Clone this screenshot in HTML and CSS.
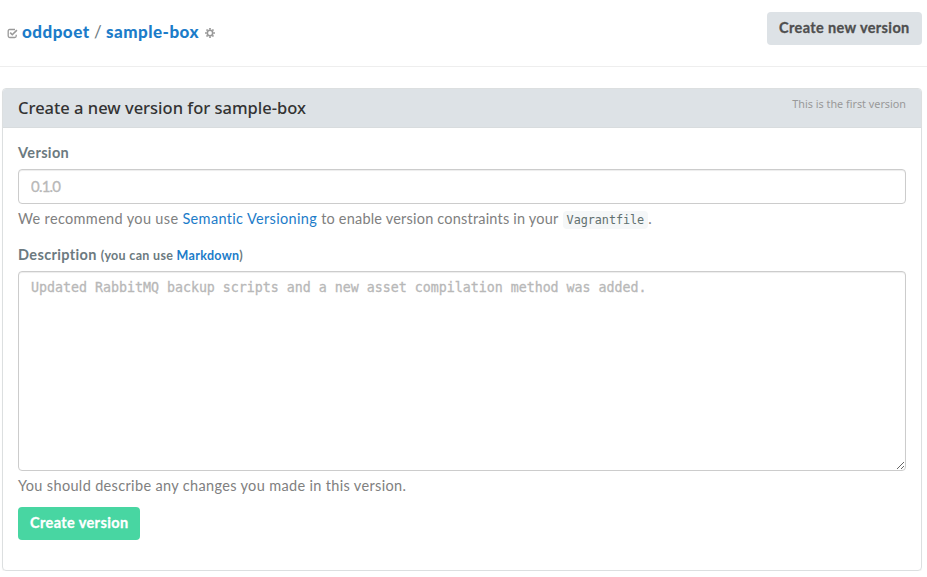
FILE: index.html
```html
<!DOCTYPE html>
<html lang="en">
<head>
<meta charset="utf-8">
<title>Create a new version for sample-box</title>
<link rel="stylesheet" href="styles.css">
</head>
<body>
<header class="page-header">
  <h1 class="crumbs">
    <svg class="icon-check" width="11" height="11" viewBox="0 0 11 11" fill="none" stroke="#999" stroke-width="1.3"><path d="M8 1.5H2.7Q1.2 1.5 1.2 3v5Q1.2 9.5 2.7 9.5h5Q9.2 9.5 9.2 8V6.7"/><path d="M3.2 4.6l2.1 2.1 4.6-4.6" stroke-width="1.6"/></svg>
    <a class="owner" href="#">oddpoet</a>
    <span class="slash">/</span>
    <a class="box" href="#">sample-box</a>
    <svg class="icon-gear" width="10" height="10" viewBox="0 0 10 10" fill="none" stroke="#999"><circle cx="5" cy="5" r="2.7" stroke-width="1.6"/><path d="M5 0v1.8M5 8.2V10M0 5h1.8M8.2 5H10M1.5 1.5l1.2 1.2M7.3 7.3l1.2 1.2M1.5 8.5l1.2-1.2M7.3 2.7l1.2-1.2" stroke-width="1.7"/></svg>
  </h1>
  <button class="btn btn-default" type="button">Create new version</button>
</header>
<main class="panel">
  <div class="panel-heading">
    <h2 class="panel-title">Create a new version for sample-box</h2>
    <span class="panel-note">This is the first version</span>
  </div>
  <form class="panel-body">
    <label class="label" for="version">Version</label>
    <input class="field" id="version" type="text" placeholder="0.1.0">
    <p class="help">We recommend you use <a href="#">Semantic Versioning</a> <span class="help-tail">to enable version constraints in your</span> <code>Vagrantfile</code>.</p>
    <label class="label label-description" for="description">Description <small>(you can use <a href="#">Markdown</a>)</small></label>
    <textarea class="field area" id="description" placeholder="Updated RabbitMQ backup scripts and a new asset compilation method was added."></textarea>
    <p class="help">You should describe any changes you made in this version.</p>
    <button class="btn btn-success" type="button">Create version</button>
  </form>
</main>
</body>
</html>
```
FILE: styles.css
```css
* { box-sizing: border-box; }
body { margin: 0; background: #fff; color: #6c7a80; font: 15px/20px Lato, sans-serif; }
a { color: #1c7cc9; text-decoration: none; }
.page-header { display: flex; justify-content: space-between; align-items: flex-start; height: 67px; padding: 12px 5px 0 7px; border-bottom: 1px solid #eee; }
.crumbs { display: flex; align-items: center; margin: 8px 0 0; font-size: 17px; line-height: 24px; font-weight: 900; letter-spacing: .48px; }
.icon-check { margin: 3px 4px 0 0; }
.owner { width: 68px; white-space: nowrap; }
.slash { width: 7px; margin: 0 5px 0 4px; font-weight: 400; }
.box { width: 94px; white-space: nowrap; }
.icon-gear { margin: 1px 0 0 5px; }
.btn { display: block; height: 33px; padding: 0 0 2px 12px; border: 0; border-radius: 4px; font: 700 14.5px/20px Lato, sans-serif; letter-spacing: .38px; -webkit-text-stroke: .3px; text-align: left; white-space: nowrap; }
.btn-default { width: 155px; background: #dde2e6; color: #4f4f4f; }
.btn-success { width: 122px; margin-top: 11px; background: #48d6a2; color: #fff; }
.panel { width: 920px; height: 483px; margin: 21px 0 0 2px; border: 1px solid #dcdfe0; border-radius: 4px; box-shadow: 0 1px 1px rgba(0,0,0,.05); }
.panel-heading { display: flex; justify-content: space-between; height: 39px; padding: 0 15px; background: #dde2e6; border-bottom: 1px solid #d8dcde; border-radius: 3px 3px 0 0; }
.panel-title { margin: 0; color: #333; font: 500 16.5px/38px "Noto Sans", sans-serif; }
.panel-note { color: #999; font: 10.8px/30px "Noto Sans", sans-serif; }
.panel-body { padding: 15px; }
.label { display: block; height: 20px; font-size: 14.5px; font-weight: 700; letter-spacing: .36px; }
.label small { font-size: 12.5px; letter-spacing: .32px; }
.field { display: block; width: 100%; height: 35px; margin: 6px 0 0; padding: 5px 12px 7px; border: 1px solid #ccc; border-radius: 4px; box-shadow: inset 0 1px 1px rgba(0,0,0,.075); background: #fff; font: 15px/20px Lato, sans-serif; letter-spacing: -.8px; }
.field::placeholder { color: #b8b8b8; opacity: 1; -webkit-text-stroke: .3px; }
.help { margin: 5px 0 0; height: 20px; color: #808080; font-size: 14.5px; letter-spacing: .34px; white-space: nowrap; }
.help-tail { letter-spacing: .2px; }
.label-description { margin-top: 16px; }
.area { height: 200px; padding: 6px 12px; font: 13.33px/20px "DejaVu Sans Mono", monospace; letter-spacing: -.03px; resize: vertical; }
code { padding: 2px 4px; border-radius: 4px; background: #f5f7f8; color: #60706f; font: 11.8px/14px "DejaVu Sans Mono", monospace; letter-spacing: -.05px; }
```
